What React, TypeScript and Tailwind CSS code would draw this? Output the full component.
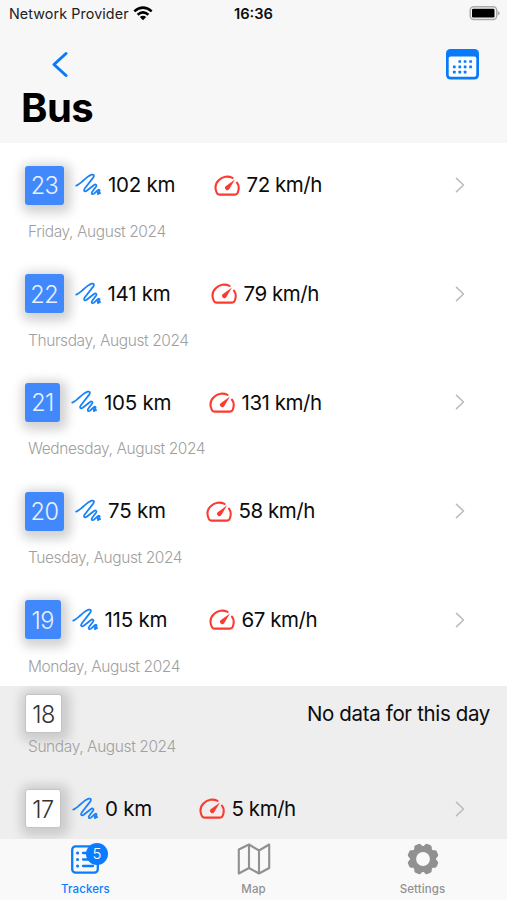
import clsx from "clsx";

interface DayEntry {
  day: string;
  label: string;
  badge: string;
  distance?: string;
  distanceWidth?: string;
  speed?: string;
}

const weekDays: DayEntry[] = [
  { day: "23", label: "Friday, August 2024", badge: "w-[39px]", distance: "102 km", distanceWidth: "w-[105.500px]", speed: "72 km/h" },
  { day: "22", label: "Thursday, August 2024", badge: "w-[38.500px]", distance: "141 km", distanceWidth: "w-[103px]", speed: "79 km/h" },
  { day: "21", label: "Wednesday, August 2024", badge: "w-[35px]", distance: "105 km", distanceWidth: "w-[104.500px]", speed: "131 km/h" },
  { day: "20", label: "Tuesday, August 2024", badge: "w-[39px]", distance: "75 km", distanceWidth: "w-[97.500px]", speed: "58 km/h" },
  { day: "19", label: "Monday, August 2024", badge: "w-[35.500px]", distance: "115 km", distanceWidth: "w-[104px]", speed: "67 km/h" },
];

function SquiggleIcon() {
  return (
    <svg viewBox="0 0 27 25" className="h-[25px] w-[27px] shrink-0" fill="none" stroke="#1a82f7" strokeWidth="1.8" strokeLinecap="round" strokeLinejoin="round">
      <path d="M1.200 12.600C3.500 12 5.500 10 8 7.800C11 5.100 14 2.500 16.700 1.700C18.900 1.200 19.600 2.700 18.200 4.600L9.900 15.300C8.300 17.600 9.300 19.500 11.700 17.800L18.700 12.200C20.700 10.700 22.300 11.700 21 13.700L17.200 18.700C16 20.500 17.200 22 19 20.600L22.800 17.300C24.200 16.200 25 17 24.400 18.200L23.600 20.300" />
      <path d="M22.300 18.800L22.600 21.600L25.600 20.300Z" fill="#1a82f7" strokeWidth="1" />
    </svg>
  );
}

function GaugeIcon() {
  return (
    <svg viewBox="0 0 26 22" className="h-[22px] w-[26px] shrink-0" fill="none" stroke="#fb3b30" strokeWidth="2.100" strokeLinecap="round" strokeLinejoin="round">
      <path d="M18.500 2.900A11.300 10.800 0 0 0 5 4.900C1.200 8.400.8 13.300 2.700 17.600Q3.400 19.600 5.400 19.600H21Q23 19.600 23.800 17.600C25.300 13.800 25 10.500 23 7.700" />
      <path d="M21 4.600L15.300 14A2.300 2.300 0 1 1 12 10.900Z" fill="#fb3b30" stroke="none" />
    </svg>
  );
}

function Chevron() {
  return (
    <svg viewBox="0 0 10 16" className="h-4 w-2.5" fill="none" stroke="#bdbdbf" strokeWidth="1.600" strokeLinecap="round" strokeLinejoin="round">
      <path d="M1.500 1.300L8.500 8L1.500 14.700" />
    </svg>
  );
}

function StatusBar() {
  return (
    <div className="grid h-7 grid-cols-3 items-center pl-[9px] pr-[7px]">
      <div className="flex items-center gap-1">
        <span className="whitespace-nowrap text-[14.300px] tracking-[0.1px] text-[#222]">Network Provider</span>
        <svg viewBox="0 0 20 15" className="mb-0.5 h-[15px] w-5 shrink-0" fill="none" stroke="#000" strokeWidth="2.500">
          <path d="M1.300 5.400Q10 -2.200 18.700 5.400" />
          <path d="M4.600 8.700Q10 4 15.400 8.700" />
          <path d="M6.800 11Q10 8.500 13.200 11L10 14.300Z" fill="#000" stroke="none" />
        </svg>
      </div>
      <span className="-ml-0.5 text-center text-[14.700px] font-semibold">16:36</span>
      <svg viewBox="0 0 31 15" className="mb-0.5 h-[15px] w-[31px] justify-self-end" fill="none">
        <rect x="1.200" y="0.800" width="26.500" height="12.700" rx="3.500" stroke="#aaa" strokeWidth="1.400" />
        <rect x="3" y="2.700" width="22.500" height="8.900" rx="1.300" fill="#000" />
        <path d="M28.700 5v4.500Q30.700 8.500 30.700 7.250T28.700 5Z" fill="#aaa" />
      </svg>
    </div>
  );
}

function CalendarIcon() {
  const dots = [
    [13.8, 12.5], [19.1, 12.5], [24.6, 12.5],
    [8.3, 17.8], [13.8, 17.8], [19.1, 17.8], [24.6, 17.8],
    [8.3, 23.2], [13.8, 23.2], [19.1, 23.2],
  ];
  return (
    <svg viewBox="0 0 33 31" className="h-[31px] w-[33px]" fill="#077bfb">
      <rect width="33" height="30.500" rx="4.500" />
      <rect x="2.700" y="7.500" width="27.600" height="20.300" rx="1.800" fill="#fcfdff" />
      {dots.map(([x, y]) => (
        <rect key={`${x}-${y}`} x={x - 1.35} y={y - 1.35} width="2.700" height="2.700" rx=".5" />
      ))}
    </svg>
  );
}

function DayBadge({ entry, empty }: { entry: DayEntry; empty?: boolean }) {
  return (
    <div
      className={clsx(
        "flex h-[39px] shrink-0 items-center justify-center rounded-[3px] pt-px text-[23.500px] font-light tracking-[-0.5px]",
        entry.badge,
        empty
          ? "border border-[#c4c4c4] bg-white text-[#333] shadow-[2px_2px_11px_6px_rgba(0,0,0,0.15)]"
          : "bg-[#4288fd] text-[#e8f1ff] shadow-[2px_3px_11px_5px_rgba(0,0,0,0.18)]"
      )}
    >
      {entry.day}
    </div>
  );
}

function Stats({ entry }: { entry: DayEntry }) {
  return (
    <>
      <div className="ml-[11px] pt-px">
        <SquiggleIcon />
      </div>
      <span className={clsx("ml-[6px] shrink-0 pt-px text-[20.500px] tracking-[-0.25px]", entry.distanceWidth)}>{entry.distance}</span>
      <div className="pt-px">
        <GaugeIcon />
      </div>
      <span className="ml-[7px] pt-px text-[20.500px] tracking-[-0.450px]">{entry.speed}</span>
      <div className="ml-auto mr-[42px]">
        <Chevron />
      </div>
    </>
  );
}

function DayLabel({ children }: { children: string }) {
  return <p className="pl-[3px] text-[15.500px] font-light leading-5 tracking-[-0.400px] text-[#a0a0a0]">{children}</p>;
}

function TabBar() {
  return (
    <nav className="grid h-[61px] shrink-0 grid-cols-3 bg-[#f9f9f9] pt-1 text-[11.500px] font-medium tracking-[0.1px] text-[#919191]">
      <div className="flex flex-col items-center pl-0.5 text-[#0a7cff]">
        <div className="relative h-[34px] w-[29px]">
          <svg viewBox="0 0 28 30" className="mt-[1.500px] h-[30px] w-7" fill="none" stroke="#0a7cff" strokeWidth="2.300" strokeLinecap="round">
            <rect x="1.200" y="1.300" width="25.600" height="26.400" rx="3.500" />
            <path d="M12 8h10M12 14.500h10M12 21h10" />
            <path d="M6.500 8h.1M6.500 14.500h.1M6.500 21h.1" strokeWidth="3" />
          </svg>
          <span className="absolute left-[15px] top-0 flex size-[22px] items-center justify-center rounded-full bg-[#0a7cff] text-[15px] font-light text-white">5</span>
        </div>
        <span className="mt-1">Trackers</span>
      </div>
      <div className="flex flex-col items-center">
        <svg viewBox="0 0 34 34" className="size-[34px]" fill="none" stroke="#919191" strokeWidth="2.100" strokeLinejoin="round">
          <path d="M1.800 6.500L12 1.500L22 7.500L32.200 1.500V25L22 30.500L12 25L1.800 30.500ZM12 1.500V25M22 7.500V30.500" />
        </svg>
        <span className="mt-1">Map</span>
      </div>
      <div className="flex flex-col items-center">
        <svg viewBox="0 0 34 34" className="size-[34px]" fill="#919191">
          <g transform="translate(17 16)">
            {[22.5, 67.5, 112.5, 157.5, 202.5, 247.5, 292.5, 337.5].map((angle) => (
              <path key={angle} transform={`rotate(${angle})`} d="M-5 -11L-3.400 -14.500Q-2.900 -15.600 -1.700 -15.600H1.700Q2.900 -15.600 3.400 -14.500L5 -11Z" />
            ))}
            <circle r="10" fill="none" stroke="#919191" strokeWidth="6.200" />
          </g>
        </svg>
        <span className="mt-1">Settings</span>
      </div>
    </nav>
  );
}

export default function App() {
  return (
    <div className="flex h-[900px] w-[507px] flex-col overflow-hidden bg-white font-['Inter',sans-serif] text-[#0c0c0c]">
      <header className="h-[143px] shrink-0 bg-[#f7f7f7]">
        <StatusBar />
        <div className="flex h-[55px] items-start justify-between pl-[52px] pr-7 pt-[21px]">
          <svg viewBox="0 0 16 27" className="mt-0.5 h-[27px] w-4" fill="none" stroke="#077bfb" strokeWidth="3" strokeLinecap="round" strokeLinejoin="round">
            <path d="M14 2.500L2 13.500L14 24.500" />
          </svg>
          <CalendarIcon />
        </div>
        <h1 className="pl-[21px] text-[40px] font-bold leading-[49px] tracking-[-0.500px] text-black">Bus</h1>
      </header>

      <main className="flex-1 overflow-hidden">
        {weekDays.map((entry) => (
          <section key={entry.day} className="h-[108.700px] pl-[25px] pt-[22.500px]">
            <div className="flex items-center">
              <DayBadge entry={entry} />
              <Stats entry={entry} />
            </div>
            <div className="mt-[17.500px]">
              <DayLabel>{entry.label}</DayLabel>
            </div>
          </section>
        ))}

        <div className="h-[154px] overflow-hidden bg-[#eee] pl-[25px] pt-[8px]">
          <div className="flex items-center justify-between pr-[17px]">
            <DayBadge entry={{ day: "18", label: "", badge: "w-[37px]" }} empty />
            <span className="pt-px text-[20.500px] tracking-[-0.350px]">No data for this day</span>
          </div>
          <div className="mt-[4px]">
            <DayLabel>Sunday, August 2024</DayLabel>
          </div>
          <div className="mt-[32px] flex items-center">
            <DayBadge entry={{ day: "17", label: "", badge: "w-[36px]" }} empty />
            <Stats entry={{ day: "17", label: "", badge: "", distance: "0 km", distanceWidth: "w-[93.500px]", speed: "5 km/h" }} />
          </div>
        </div>
      </main>

      <TabBar />
    </div>
  );
}
